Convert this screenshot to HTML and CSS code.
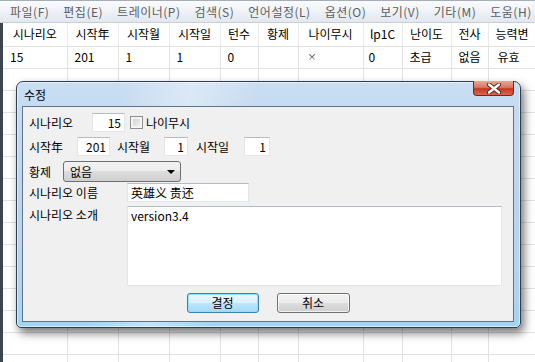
FILE: index.html
```html
<!DOCTYPE html>
<html>
<head>
  <title>수정</title>
  <link rel="stylesheet" href="styles.css">
</head>
<body>
  <div id="menubar">
    <span class="menu">파일(F)</span>
    <span class="menu">편집(E)</span>
    <span class="menu">트레이너(P)</span>
    <span class="menu">검색(S)</span>
    <span class="menu">언어설정(L)</span>
    <span class="menu">옵션(O)</span>
    <span class="menu">보기(V)</span>
    <span class="menu">기타(M)</span>
    <span class="menu">도움(H)</span>
  </div>

  <div id="grid">
    <table>
      <colgroup>
        <col style="width:64px"><col style="width:51px"><col style="width:51px"><col style="width:51px">
        <col style="width:38px"><col style="width:40px"><col style="width:65px"><col style="width:39px">
        <col style="width:49px"><col style="width:37px"><col style="width:60px">
      </colgroup>
      <tr class="head">
        <th>시나리오</th><th>시작年</th><th>시작월</th><th>시작일</th><th>턴수</th><th>황제</th>
        <th>나이무시</th><th>lp1C</th><th>난이도</th><th>전사</th><th class="clip">능력변</th>
      </tr>
      <tr>
        <td>15</td><td>201</td><td>1</td><td>1</td><td>0</td><td></td>
        <td class="mark">×</td><td class="tight">0</td><td>초급</td><td>없음</td><td class="last">유효</td>
      </tr>
      <tr><td></td><td></td><td></td><td></td><td></td><td></td><td></td><td></td><td></td><td></td><td></td></tr>
      <tr><td></td><td></td><td></td><td></td><td></td><td></td><td></td><td></td><td></td><td></td><td></td></tr>
      <tr><td></td><td></td><td></td><td></td><td></td><td></td><td></td><td></td><td></td><td></td><td></td></tr>
      <tr><td></td><td></td><td></td><td></td><td></td><td></td><td></td><td></td><td></td><td></td><td></td></tr>
      <tr><td></td><td></td><td></td><td></td><td></td><td></td><td></td><td></td><td></td><td></td><td></td></tr>
      <tr><td></td><td></td><td></td><td></td><td></td><td></td><td></td><td></td><td></td><td></td><td></td></tr>
      <tr><td></td><td></td><td></td><td></td><td></td><td></td><td></td><td></td><td></td><td></td><td></td></tr>
      <tr><td></td><td></td><td></td><td></td><td></td><td></td><td></td><td></td><td></td><td></td><td></td></tr>
      <tr><td></td><td></td><td></td><td></td><td></td><td></td><td></td><td></td><td></td><td></td><td></td></tr>
      <tr><td></td><td></td><td></td><td></td><td></td><td></td><td></td><td></td><td></td><td></td><td></td></tr>
      <tr><td></td><td></td><td></td><td></td><td></td><td></td><td></td><td></td><td></td><td></td><td></td></tr>
      <tr><td></td><td></td><td></td><td></td><td></td><td></td><td></td><td></td><td></td><td></td><td></td></tr>
      <tr><td></td><td></td><td></td><td></td><td></td><td></td><td></td><td></td><td></td><td></td><td></td></tr>
      <tr><td></td><td></td><td></td><td></td><td></td><td></td><td></td><td></td><td></td><td></td><td></td></tr>
    </table>
  </div>

  <div id="dialog">
    <div class="titlebar">
      <span class="title">수정</span>
      <div class="close">
        <svg width="16" height="11" viewBox="0 0 16 11">
          <path d="M3 1.5 L13 9.5 M13 1.5 L3 9.5" stroke="#5a1e16" stroke-width="4.2" stroke-linecap="round"/>
          <path d="M3 1.5 L13 9.5 M13 1.5 L3 9.5" stroke="#fff" stroke-width="2.4" stroke-linecap="round"/>
        </svg>
      </div>
    </div>

    <div class="client">
      <div class="row r1">
        <span class="lbl w63">시나리오</span>
        <input class="box num w33" value="15">
        <span class="check"></span>
        <span class="check-lbl">나이무시</span>
      </div>

      <div class="row r2">
        <span class="lbl w48">시작年</span>
        <input class="box num w33" value="201">
        <span class="lbl w54 pl7">시작월</span>
        <input class="box num w24" value="1">
        <span class="lbl w56 pl8">시작일</span>
        <input class="box num w26" value="1">
      </div>

      <div class="row r3">
        <span class="lbl w34">황제</span>
        <div class="combo">
          <span>없음</span>
          <span class="arrow"></span>
        </div>
      </div>

      <div class="row r4">
        <span class="lbl w98">시나리오 이름</span>
        <input class="box w122" value="英雄义 贵还">
      </div>

      <div class="row r5">
        <span class="lbl w98 top">시나리오 소개</span>
        <textarea class="memo">version3.4</textarea>
      </div>

      <div class="buttons">
        <button class="btn default">결정</button>
        <button class="btn">취소</button>
      </div>
    </div>
  </div>
</body>
</html>
```

FILE: styles.css
```css
body {
  margin: 0;
  width: 535px;
  height: 362px;
  overflow: hidden;
  position: relative;
  background: #fff;
  color: #000;
  font-family: "Noto Sans CJK KR", "Liberation Sans", sans-serif;
  font-size: 12px;
  line-height: 16px;
}

#menubar {
  box-sizing: border-box;
  height: 23px;
  display: flex;
  align-items: center;
  padding-left: 3px;
  background: linear-gradient(#fafbfd, #e2e8f0);
  border-top: 1px solid #a4adb8;
  border-bottom: 1px solid #c8ced6;
  color: #5e5e5e;
}

.menu {
  padding: 0 7px;
  letter-spacing: 0.5px;
  white-space: nowrap;
}

#grid {
  border-left: 3px solid #3d464e;
  height: 339px;
}

table {
  border-collapse: collapse;
  table-layout: fixed;
  width: 534px;
}

th, td {
  box-sizing: border-box;
  height: 22px;
  padding: 0 0 0 7px;
  border-right: 1px solid #e2e2e2;
  border-bottom: 1px solid #e2e2e2;
  white-space: nowrap;
  overflow: hidden;
  text-align: left;
  font-weight: normal;
}

.head th {
  height: 23px;
  padding: 0;
  text-align: center;
  border-right-color: #ececec;
}

.head th.clip {
  text-align: left;
  padding-left: 7px;
}

td.mark {
  padding-left: 9px;
  font-size: 9px;
  color: #333;
}

td.tight {
  padding-left: 5px;
}

td.last {
  padding-left: 9px;
}

/* dialog window */
#dialog {
  position: absolute;
  left: 16px;
  top: 81px;
  width: 505px;
  height: 247px;
  box-sizing: border-box;
  display: flex;
  flex-direction: column;
  padding: 0 6px 5px 5px;
  border: 1px solid #2f3f4f;
  border-radius: 7px 7px 5px 5px;
  background:
    linear-gradient(100deg, rgba(255,255,255,0) 20%, rgba(255,255,255,0.35) 32%, rgba(255,255,255,0) 44%),
    linear-gradient(#cadef2, #bdd5ed 40%, #b4d3ef 85%, #9fd6f3);
  box-shadow: 0 0 0 1px rgba(255,255,255,0.5) inset, 3px 5px 10px rgba(0,0,0,0.55);
}

.titlebar {
  position: relative;
  height: 24px;
  display: flex;
  align-items: center;
  padding-left: 2px;
  padding-top: 2px;
  box-sizing: border-box;
}

.close {
  position: absolute;
  top: -1px;
  right: 0;
  width: 41px;
  height: 15px;
  box-sizing: border-box;
  border: 1px solid #6b2b22;
  border-top: none;
  border-radius: 0 0 4px 4px;
  background: linear-gradient(#eba696, #d77862 45%, #c23a22 55%, #d9674c);
  display: flex;
  align-items: center;
  justify-content: center;
}

.client {
  flex: 1;
  box-sizing: border-box;
  background: #f0f0f0;
  border: 1px solid #5f7287;
  padding: 6px 0 0 6px;
}

.row {
  display: flex;
  align-items: center;
  white-space: nowrap;
}

.r2 { margin-top: 5px; }
.r3 { margin-top: 5px; }
.r4 { margin-top: 1px; }
.r5 { margin-top: 4px; align-items: flex-start; }

.lbl { display: inline-block; box-sizing: border-box; }
.lbl.top { padding-top: 1px; }
.w34 { width: 34px; }
.w48 { width: 48px; }
.w54 { width: 54px; }
.w56 { width: 56px; }
.w63 { width: 63px; }
.w98 { width: 98px; }
.pl7 { padding-left: 7px; }
.pl8 { padding-left: 8px; }

.box {
  box-sizing: border-box;
  height: 19px;
  margin: 0;
  padding: 0 3px;
  font: inherit;
  color: #000;
  background: #fff;
  border: 1px solid #e2e6eb;
  border-top-color: #b8bcc2;
  outline: none;
}

.num { text-align: right; }
.w24 { width: 24px; }
.w26 { width: 26px; }
.w33 { width: 33px; }
.w122 { width: 122px; }

.check {
  box-sizing: border-box;
  width: 13px;
  height: 13px;
  margin-left: 5px;
  border: 1px solid #8e8f8f;
  background: linear-gradient(135deg, #cbcbcb, #f6f6f6);
  box-shadow: inset 0 0 0 2px #f4f4f4;
}

.check-lbl { margin-left: 3px; }

.combo {
  box-sizing: border-box;
  width: 118px;
  height: 21px;
  display: flex;
  align-items: center;
  justify-content: space-between;
  padding: 0 5px 0 6px;
  border: 1px solid #707070;
  border-radius: 3px;
  background: linear-gradient(#f2f2f2, #ebebeb 50%, #dddddd 50%, #cfcfcf);
}

.arrow {
  width: 0;
  height: 0;
  border-left: 4px solid transparent;
  border-right: 4px solid transparent;
  border-top: 4px solid #000;
}

.memo {
  box-sizing: border-box;
  width: 375px;
  height: 80px;
  margin: 0;
  padding: 1px 3px;
  font: inherit;
  resize: none;
  background: #fff;
  border: 1px solid #e2e6eb;
  border-top-color: #b8bcc2;
  outline: none;
  overflow: hidden;
}

.buttons {
  display: flex;
  justify-content: center;
  gap: 18px;
  margin-top: 7px;
  padding-right: 6px;
}

.btn {
  box-sizing: border-box;
  width: 73px;
  height: 20px;
  padding: 0;
  font: inherit;
  color: #000;
  border: 1px solid #707070;
  border-radius: 3px;
  background: linear-gradient(#f2f2f2, #ebebeb 50%, #dddddd 50%, #cfcfcf);
  box-shadow: inset 0 0 0 1px rgba(255,255,255,0.7);
}

.btn.default {
  width: 72px;
  border-color: #3c7fb1;
  background: linear-gradient(#eaf6fd, #d9f0fc 50%, #bee6fd 50%, #a7d9f5);
  box-shadow: inset 0 0 0 1px #8fe0f9;
}
```
